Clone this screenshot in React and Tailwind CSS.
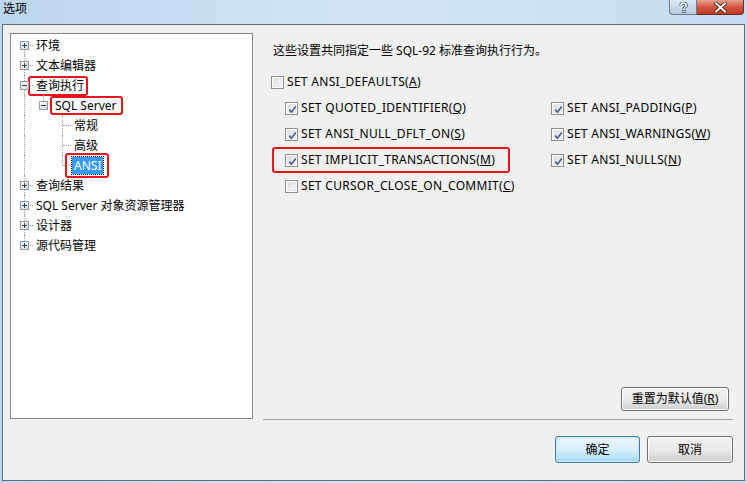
import React from 'react';

const FONT = { fontFamily: '"Noto Sans", "Noto Sans CJK SC", sans-serif' };

function Expander({ open }) {
  return (
    <svg width="9" height="9" viewBox="0 0 9 9" className="absolute left-[5px] top-[6px] z-10">
      <defs>
        <linearGradient id={open ? 'gm' : 'gp'} x1="0" y1="0" x2="1" y2="1">
          <stop offset="0" stopColor="#ffffff" />
          <stop offset="1" stopColor="#d6d6cf" />
        </linearGradient>
      </defs>
      <rect x="0.5" y="0.5" width="8" height="8" fill={`url(#${open ? 'gm' : 'gp'})`} stroke="#8e9aa6" />
      <line x1="2" y1="4.5" x2="7" y2="4.5" stroke="#2c3a55" />
      {!open && <line x1="4.5" y1="2" x2="4.5" y2="7" stroke="#2c3a55" />}
    </svg>
  );
}

// one guide column of the tree: 19px wide, line at x=9
function Guide({ kind, box }) {
  const v = 'absolute left-[9px] w-0 border-l border-dotted border-[#a0a0a0]';
  const h = 'absolute left-[10px] top-[10px] w-[8px] h-0 border-t border-dotted border-[#a0a0a0]';
  return (
    <div className="relative w-[19px] h-5 shrink-0">
      {(kind === 'pipe' || kind === 'tee') && <div className={`${v} top-0 h-5`} />}
      {kind === 'corner' && <div className={`${v} top-0 h-[10px]`} />}
      {kind === 'first' && <div className={`${v} top-[10px] h-[10px]`} />}
      {kind !== 'pipe' && kind !== 'blank' && <div className={h} />}
      {box && <Expander open={box === 'open'} />}
    </div>
  );
}

function TreeRow({ guides, label, selected, mark }) {
  return (
    <div className="flex items-center h-5 text-[12px] text-black whitespace-nowrap">
      {guides.map((g, i) => (
        <Guide key={i} kind={g[0]} box={g[1]} />
      ))}
      <span className="relative">
        <span
          className={
            selected
              ? 'block px-[2px] leading-[17px] bg-[#3399ff] text-white outline-1 outline-dotted outline-[#000]'
              : 'block px-[2px] leading-[17px]'
          }
        >
          {label}
        </span>
        {mark && (
          <span
            className={`absolute border-2 border-[#e8141c] rounded-[3px] pointer-events-none ${mark}`}
          />
        )}
      </span>
    </div>
  );
}

function CheckBox({ checked }) {
  return (
    <div className="w-[13px] h-[13px] border border-[#8f8f8f] bg-white p-px shrink-0">
      <div className="relative w-full h-full bg-gradient-to-br from-[#dcdcdc] to-[#fbfbfb] border border-[#e8e8e8]">
        {checked && (
          <svg width="11" height="11" viewBox="0 0 11 11" className="absolute -left-[1px] -top-[1px]">
            <path d="M2.3 5.6 L4.4 8.2 L8.8 2.4" fill="none" stroke="#4a5d8e" strokeWidth="1.7" />
          </svg>
        )}
      </div>
    </div>
  );
}

function Option({ text, mn, after = ')', checked }) {
  return (
    <div className="flex items-center gap-[3px] h-5 text-[12px] tracking-[0.3px] text-black whitespace-nowrap">
      <CheckBox checked={checked} />
      <span>
        {text}(<u>{mn}</u>
        {after}
      </span>
    </div>
  );
}

function Win7Button({ children, primary, className }) {
  return (
    <button
      className={`rounded-[3px] border text-[12px] text-black ${
        primary
          ? 'border-[#3c7fb1] bg-gradient-to-b from-[#eaf6fd] via-[#d9f0fc] to-[#a7d9f5] shadow-[inset_0_0_0_1px_#c8e8fa]'
          : 'border-[#707070] bg-gradient-to-b from-[#f2f2f2] via-[#ebebeb] to-[#cfcfcf] shadow-[inset_0_0_0_1px_#fcfcfc]'
      } ${className}`}
    >
      {children}
    </button>
  );
}

export default function App() {
  return (
    <div
      className="w-[747px] h-[483px] flex flex-col overflow-hidden bg-gradient-to-r from-[#bcd6ef] via-[#d3e6f8] to-[#c4dcf2]"
      style={FONT}
    >
      {/* title bar */}
      <div className="h-[24px] flex items-start justify-between shrink-0">
        <div className="pl-[3px] pt-[1px] text-[12px] text-black leading-[16px]">选项</div>
        <div className="flex mr-[3px]">
          <div className="w-[28px] h-[15px] rounded-bl-[4px] border border-t-0 border-[#6a7d93] bg-gradient-to-b from-[#dde9f5] to-[#b5c9df] flex items-center justify-center">
            <svg width="9" height="11" viewBox="0 0 9 11">
              <path
                d="M1.8 3.6 C1.8 1.8 3 1 4.5 1 C6 1 7.2 1.9 7.2 3.3 C7.2 4.9 5 5.1 5 6.8"
                fill="none"
                stroke="#33455e"
                strokeWidth="3"
              />
              <path
                d="M1.8 3.6 C1.8 1.8 3 1 4.5 1 C6 1 7.2 1.9 7.2 3.3 C7.2 4.9 5 5.1 5 6.8"
                fill="none"
                stroke="#ffffff"
                strokeWidth="1.5"
              />
              <rect x="3.5" y="8" width="3" height="3" fill="#33455e" />
              <rect x="4.2" y="8.7" width="1.6" height="1.6" fill="#ffffff" />
            </svg>
          </div>
          <div className="w-[47px] h-[15px] rounded-br-[4px] border border-t-0 border-l-0 border-[#6d2a22] bg-gradient-to-b from-[#e5a08f] via-[#d4553f] to-[#c23a24] flex items-center justify-center">
            <svg width="13" height="11" viewBox="0 0 13 11">
              <path d="M2 1.5 L11 9.5 M11 1.5 L2 9.5" stroke="#3b1510" strokeWidth="3.6" strokeLinecap="square" />
              <path d="M2 1.5 L11 9.5 M11 1.5 L2 9.5" stroke="#ffffff" strokeWidth="2" strokeLinecap="square" />
            </svg>
          </div>
        </div>
      </div>

      {/* client frame */}
      <div className="ml-[2px] mr-[2px] mb-[2px] h-[457px] border border-[#646d78] bg-[#f0f0f0] pl-[7px] pr-[11px] pt-[8px] flex flex-col">
        <div className="flex">
          {/* tree */}
          <div className="w-[243px] h-[386px] border border-[#828790] bg-white pt-px pl-[4px] shrink-0">
            <TreeRow guides={[['first', 'closed']]} label="环境" />
            <TreeRow guides={[['tee', 'closed']]} label="文本编辑器" />
            <TreeRow
              guides={[['tee', 'open']]}
              label="查询执行"
              mark="-left-[6px] -right-[2px] -top-[1px] -bottom-[2px]"
            />
            <TreeRow
              guides={[['pipe'], ['corner', 'open']]}
              label="SQL Server"
              mark="-left-[3px] -right-[4px] -top-[1px] -bottom-[1px]"
            />
            <TreeRow guides={[['pipe'], ['blank'], ['tee']]} label="常规" />
            <TreeRow guides={[['pipe'], ['blank'], ['tee']]} label="高级" />
            <TreeRow
              guides={[['pipe'], ['blank'], ['corner']]}
              label="ANSI"
              selected
              mark="-left-[7px] -right-[6px] -top-[4px] -bottom-[4px]"
            />
            <TreeRow guides={[['tee', 'closed']]} label="查询结果" />
            <TreeRow guides={[['tee', 'closed']]} label="SQL Server 对象资源管理器" />
            <TreeRow guides={[['tee', 'closed']]} label="设计器" />
            <TreeRow guides={[['corner', 'closed']]} label="源代码管理" />
          </div>

          {/* options panel */}
          <div className="flex-1 ml-[10px] flex flex-col">
            <div className="h-[386px] flex flex-col">
              <div className="pt-[10px] pl-[10px] text-[12px] leading-[16px] text-black whitespace-nowrap">
                这些设置共同指定一些 SQL-92 标准查询执行行为。
              </div>
              <div className="mt-[13px] pl-[8px]">
                <Option text="SET ANSI_DEFAULTS" mn="A" />
              </div>
              <div className="mt-[6px] pl-[22px] flex">
                <div className="w-[266px] flex flex-col gap-[6px]">
                  <Option text="SET QUOTED_IDENTIFIER" mn="Q" checked />
                  <Option text="SET ANSI_NULL_DFLT_ON" mn="S" checked />
                  <div className="relative">
                    <Option text="SET IMPLICIT_TRANSACTIONS" mn="M" checked />
                    <span className="absolute -left-[13px] top-[-3px] w-[238px] h-[26px] border-2 border-[#e8141c] rounded-[3px]" />
                  </div>
                  <Option text="SET CURSOR_CLOSE_ON_COMMIT" mn="C" />
                </div>
                <div className="flex flex-col gap-[6px]">
                  <Option text="SET ANSI_PADDING" mn="P" checked />
                  <Option text="SET ANSI_WARNINGS" mn="W" checked />
                  <Option text="SET ANSI_NULLS" mn="N" checked />
                </div>
              </div>
              <div className="flex-1" />
              <div className="flex justify-end pr-[4px] pb-[8px]">
                <Win7Button className="w-[108px] h-[24px]">
                  重置为默认值(<u>R</u>)
                </Win7Button>
              </div>
            </div>
            <div className="h-px bg-[#a0a0a0]" />
          </div>
        </div>

        {/* dialog buttons */}
        <div className="flex justify-end gap-[7px] mt-[16px]">
          <Win7Button primary className="w-[85px] h-[27px]">
            确定
          </Win7Button>
          <Win7Button className="w-[86px] h-[27px]">取消</Win7Button>
        </div>
      </div>
    </div>
  );
}
